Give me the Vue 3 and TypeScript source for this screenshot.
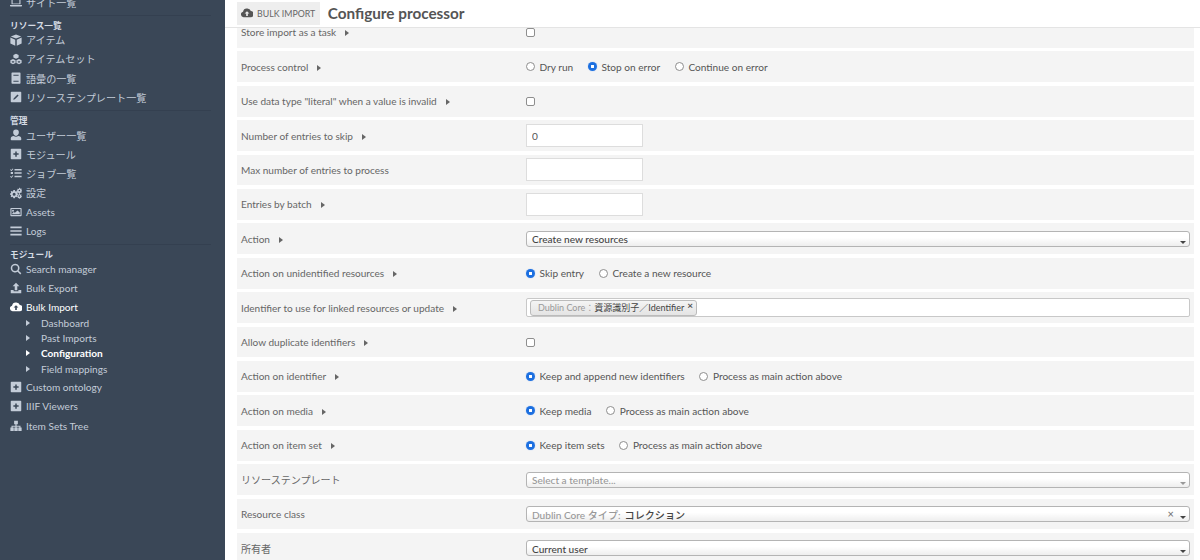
<script setup lang="ts">
type Control =
  | { kind: 'check' }
  | { kind: 'radio'; options: string[]; checked: number }
  | { kind: 'input'; value?: string }
  | { kind: 'select'; text: string; placeholder?: boolean; prefix?: string; clear?: boolean }
  | { kind: 'tags' }

interface Row {
  label: string
  arrow?: boolean
  control: Control
}

interface NavItem {
  icon: string
  label: string
  active?: boolean
  children?: { label: string; active?: boolean }[]
}

interface NavGroup {
  title?: string
  items: NavItem[]
}

const groups: NavGroup[] = [
  { items: [{ icon: 'laptop', label: 'サイト一覧' }] },
  {
    title: 'リソース一覧',
    items: [
      { icon: 'cube', label: 'アイテム' },
      { icon: 'cubes', label: 'アイテムセット' },
      { icon: 'book', label: '語彙の一覧' },
      { icon: 'edit', label: 'リソーステンプレート一覧' },
    ],
  },
  {
    title: '管理',
    items: [
      { icon: 'user', label: 'ユーザー一覧' },
      { icon: 'plus', label: 'モジュール' },
      { icon: 'tasks', label: 'ジョブ一覧' },
      { icon: 'cogs', label: '設定' },
      { icon: 'image', label: 'Assets' },
      { icon: 'bars', label: 'Logs' },
    ],
  },
  {
    title: 'モジュール',
    items: [
      { icon: 'search', label: 'Search manager' },
      { icon: 'upload', label: 'Bulk Export' },
      {
        icon: 'cloud',
        label: 'Bulk Import',
        active: true,
        children: [
          { label: 'Dashboard' },
          { label: 'Past Imports' },
          { label: 'Configuration', active: true },
          { label: 'Field mappings' },
        ],
      },
      { icon: 'plus', label: 'Custom ontology' },
      { icon: 'plus', label: 'IIIF Viewers' },
      { icon: 'tree', label: 'Item Sets Tree' },
    ],
  },
]

const rows: Row[] = [
  { label: 'Store import as a task', arrow: true, control: { kind: 'check' } },
  { label: 'Process control', arrow: true, control: { kind: 'radio', options: ['Dry run', 'Stop on error', 'Continue on error'], checked: 1 } },
  { label: 'Use data type "literal" when a value is invalid', arrow: true, control: { kind: 'check' } },
  { label: 'Number of entries to skip', arrow: true, control: { kind: 'input', value: '0' } },
  { label: 'Max number of entries to process', control: { kind: 'input' } },
  { label: 'Entries by batch', arrow: true, control: { kind: 'input' } },
  { label: 'Action', arrow: true, control: { kind: 'select', text: 'Create new resources' } },
  { label: 'Action on unidentified resources', arrow: true, control: { kind: 'radio', options: ['Skip entry', 'Create a new resource'], checked: 0 } },
  { label: 'Identifier to use for linked resources or update', arrow: true, control: { kind: 'tags' } },
  { label: 'Allow duplicate identifiers', arrow: true, control: { kind: 'check' } },
  { label: 'Action on identifier', arrow: true, control: { kind: 'radio', options: ['Keep and append new identifiers', 'Process as main action above'], checked: 0 } },
  { label: 'Action on media', arrow: true, control: { kind: 'radio', options: ['Keep media', 'Process as main action above'], checked: 0 } },
  { label: 'Action on item set', arrow: true, control: { kind: 'radio', options: ['Keep item sets', 'Process as main action above'], checked: 0 } },
  { label: 'リソーステンプレート', control: { kind: 'select', text: 'Select a template...', placeholder: true } },
  { label: 'Resource class', control: { kind: 'select', text: 'コレクション', prefix: 'Dublin Core タイプ:', clear: true } },
  { label: '所有者', control: { kind: 'select', text: 'Current user' } },
]
</script>

<template>
  <div class="page">
    <aside class="sidebar">
      <section v-for="(group, g) in groups" :key="g" class="group">
        <h4 v-if="group.title">{{ group.title }}</h4>
        <template v-for="item in group.items" :key="item.label">
          <div class="nav-item" :class="{ active: item.active }">
            <svg class="icon" viewBox="0 0 16 16" fill="currentColor">
              <path v-if="item.icon === 'laptop'" d="M3 2h10a1 1 0 0 1 1 1v8H2V3a1 1 0 0 1 1-1zm.5 1.5V10h9V3.5zM0 12h16v1a1 1 0 0 1-1 1H1a1 1 0 0 1-1-1z" />
              <path v-else-if="item.icon === 'cube'" d="M8 .5l7 2.700L8 6 1 3.200zM.5 4.800L7 7.500V15.500L.5 12.700zM15.500 4.800v7.900L9 15.500V7.500z" />
              <path v-else-if="item.icon === 'cubes'" d="M8 1l3.500 1.500v3.600L8 7.600 4.500 6.100V2.500zM4 8l3.500 1.500v3.800L4 15 .5 13.300V9.500zM12 8l3.500 1.500v3.800L12 15l-3.500-1.700V9.500zM2.500 10.500v1.900L4 13.100l1.500-.7v-1.900L4 11.200zM10.500 10.500v1.900l1.500.7 1.500-.7v-1.900l-1.500.7z" />
              <path v-else-if="item.icon === 'book'" fill-rule="evenodd" d="M3 .5h10a1 1 0 0 1 1 1v13a1 1 0 0 1-1 1H3a1 1 0 0 1-1-1v-13a1 1 0 0 1 1-1zm1.500 3v1.500h7V3.500zm0 8v1.500h7V11.500z" />
              <path v-else-if="item.icon === 'edit'" fill-rule="evenodd" d="M2 1h12a1 1 0 0 1 1 1v12a1 1 0 0 1-1 1H2a1 1 0 0 1-1-1V2a1 1 0 0 1 1-1zM10 4.500L5 9.500l-.7 2.200 2.200-.7 5-5z" />
              <path v-else-if="item.icon === 'user'" d="M8 .8a3.800 3.800 0 0 1 3.800 4c0 2.400-1.700 4.400-3.800 4.400S4.200 7.200 4.200 4.800A3.800 3.800 0 0 1 8 .8zM5 9.200c1.800 1.300 4.200 1.300 6 0 2.500.3 4 1.500 4 3.300V14a1 1 0 0 1-1 1H2a1 1 0 0 1-1-1v-1.500c0-1.800 1.500-3 4-3.300z" />
              <path v-else-if="item.icon === 'plus'" fill-rule="evenodd" d="M2 1h12a1 1 0 0 1 1 1v12a1 1 0 0 1-1 1H2a1 1 0 0 1-1-1V2a1 1 0 0 1 1-1zm5 3.500V7H4.500v2H7v2.500h2V9h2.500V7H9V4.500z" />
              <path v-else-if="item.icon === 'tasks'" d="M6 2.500h9.500v2H6zM6 7h9.500v2H6zM6 11.500h9.500v2H6zM.8 3l1 1L3.700 2l.8.8L1.800 5.500.1 3.800zM1 6.700h3v2.600H1zM.8 12l1 1 1.900-2 .8.8-2.700 2.700-1.700-1.700z" />
              <path v-else-if="item.icon === 'cogs'" fill-rule="evenodd" d="M5.500 4l1 .1.400 1.400 1.100.5 1.300-.7.8.9-.7 1.200.5 1.100 1.400.4v1.300l-1.400.4-.5 1.100.7 1.200-.8.9-1.300-.7-1.100.5-.4 1.400H4.500l-.4-1.400-1.100-.5-1.300.7-.8-.9.7-1.200L1.100 10.500-.2 10.100V8.800l1.300-.4.500-1.100-.7-1.200.8-.9 1.300.7L4.100 5.500 4.500 4.100zM5.500 7.500a2 2 0 1 0 0 4 2 2 0 0 0 0-4zM12.500 1l.8.1.2.9.8.4.9-.4.5.7-.5.8.2.9.9.3v.9l-.9.3-.4.8.5.8-.6.6-.8-.4-.8.3-.3.9h-.9l-.3-.9-.8-.4-.8.5-.6-.6.5-.9-.3-.8-.9-.3v-.8l.9-.3.3-.8-.5-.8.6-.6.8.4.8-.3zM12.500 3.500a1 1 0 1 0 0 2 1 1 0 0 0 0-2zM12.500 9l.7.1.2.8.7.3.7-.4.5.6-.4.7.2.7.8.2v.9l-.8.2-.3.7.4.7-.5.6-.7-.4-.7.3-.2.8h-.8l-.2-.8-.7-.3-.7.4-.5-.6.4-.7-.3-.7-.8-.2v-.8l.8-.3.3-.7-.4-.7.5-.6.7.4.7-.3zM12.500 11a1 1 0 1 0 0 2 1 1 0 0 0 0-2z" />
              <path v-else-if="item.icon === 'image'" fill-rule="evenodd" d="M1.500 2.500h13a1 1 0 0 1 1 1v9a1 1 0 0 1-1 1h-13a1 1 0 0 1-1-1v-9a1 1 0 0 1 1-1zm.5 1.500v8h12V4zm2 1a1.300 1.300 0 1 1 0 2.600A1.300 1.300 0 0 1 4 5zm-1 6V9.500l2-1.500 1.500 1 3.500-3 3 2.500V11z" />
              <path v-else-if="item.icon === 'bars'" d="M.5 2h15v2.200H.5zM.5 6.900h15v2.200H.5zM.5 11.800h15v2.200H.5z" />
              <path v-else-if="item.icon === 'search'" fill-rule="evenodd" d="M6.800 1a5.800 5.800 0 0 1 4.700 9.200l3.600 3.600-1.400 1.400-3.600-3.600A5.800 5.800 0 1 1 6.800 1zm0 2a3.800 3.800 0 1 0 0 7.600 3.800 3.800 0 0 0 0-7.600z" />
              <path v-else-if="item.icon === 'upload'" d="M8 1l4.500 4.500H9.700V11H6.300V5.500H3.500zM1 10.500h3.800v1.800h6.400v-1.800H15V15H1z" />
              <path v-else-if="item.icon === 'cloud'" fill-rule="evenodd" d="M8.500 2a4.800 4.800 0 0 1 4.600 3.400A3.900 3.900 0 0 1 12.500 13.500H3.700a3.600 3.600 0 0 1-1-7.100A5.300 5.300 0 0 1 8.500 2zM8 5.500L4.800 8.800h2.100V12h2.200V8.800h2.100z" />
              <path v-else d="M5.500 1h5v4.500H8.800v2H14V10h1.500v4.500H11V10h1.500V9H8.800v1h1.500v4.500H5.700V10h1.500V9H3.500v1H5v4.500H.5V10H2V7.500h5.200v-2H5.500z" />
            </svg>
            <span>{{ item.label }}</span>
          </div>
          <div v-if="item.children" class="nav-children">
            <div v-for="child in item.children" :key="child.label" class="nav-child" :class="{ active: child.active }">
              <i class="tri"></i>{{ child.label }}
            </div>
          </div>
        </template>
      </section>
    </aside>

    <main class="main">
      <header class="topbar">
        <div class="badge">
          <svg class="badge-icon" viewBox="0 0 16 16" fill="currentColor">
            <path fill-rule="evenodd" d="M8.500 2a4.800 4.800 0 0 1 4.600 3.400A3.900 3.900 0 0 1 12.500 13.500H3.700a3.600 3.600 0 0 1-1-7.100A5.300 5.300 0 0 1 8.500 2zM8 5.500L4.800 8.800h2.100V12h2.200V8.800h2.100z" />
          </svg>
          BULK IMPORT
        </div>
        <h1>Configure processor</h1>
      </header>

      <div class="scroller">
        <div class="rows">
          <div v-for="row in rows" :key="row.label" class="row">
            <div class="label">
              {{ row.label }}<i v-if="row.arrow" class="tri"></i>
            </div>
            <div class="control">
              <input v-if="row.control.kind === 'check'" class="check" type="checkbox" />

              <div v-else-if="row.control.kind === 'radio'" class="radios">
                <label v-for="(opt, i) in row.control.options" :key="opt" class="radio">
                  <input type="radio" :name="row.label" :checked="i === row.control.checked" />{{ opt }}
                </label>
              </div>

              <input v-else-if="row.control.kind === 'input'" class="text" type="text" :value="row.control.value ?? ''" />

              <div v-else-if="row.control.kind === 'select'" class="select" :class="{ placeholder: row.control.placeholder }">
                <span v-if="row.control.prefix" class="prefix">{{ row.control.prefix }}</span>
                <span>{{ row.control.text }}</span>
                <span v-if="row.control.clear" class="clear">×</span>
                <i class="caret"></i>
              </div>

              <div v-else class="tags">
                <span class="tag">
                  <span class="prefix">Dublin Core：</span>資源識別子／Identifier<b>×</b>
                </span>
              </div>
            </div>
          </div>
        </div>
      </div>
    </main>
  </div>
</template>

<style>
html, body { margin: 0; background: #fff; }
</style>

<style scoped>
.page {
  display: flex;
  width: 1200px;
  height: 560px;
  overflow: hidden;
  font-family: Lato, "Noto Sans CJK JP", sans-serif;
  color: #555;
}

/* sidebar */
.sidebar {
  width: 225px;
  flex: none;
  box-sizing: border-box;
  padding: 0 14px 0 10px;
  background: #3a4757;
  color: #c3ccd8;
  font-size: 10.1px;
  overflow: hidden;
}
.group { padding-bottom: 3px; margin-bottom: 3.5px; border-bottom: 1px solid #344050; }
.group:first-child { margin-top: -7.5px; }
.group:last-child { border-bottom: 0; }
.group h4 {
  margin: 0;
  height: 11px;
  line-height: 13px;
  font-size: 8.7px;
  font-weight: 700;
  color: #d6dce4;
}
.nav-item {
  display: flex;
  align-items: center;
  gap: 4px;
  height: 19.2px;
}
.nav-item.active, .nav-child.active { color: #fff; }
.icon { width: 12px; height: 12px; flex: none; }
.nav-children { margin: -1.6px 0 1.4px; }
.nav-child {
  display: flex;
  align-items: center;
  height: 15.3px;
  padding-left: 16px;
}
.nav-child .tri { margin: 0 11px 0 0; }
.nav-child.active { font-weight: 700; }
.tri {
  display: inline-block;
  width: 0;
  height: 0;
  margin-left: 9px;
  border-style: solid;
  border-width: 3px 0 3px 4px;
  border-color: transparent transparent transparent currentColor;
}

/* main */
.main { flex: 1; min-width: 0; display: flex; flex-direction: column; }
.topbar {
  height: 28px;
  flex: none;
  box-sizing: border-box;
  display: flex;
  align-items: center;
  gap: 7.5px;
  padding: 0 0 1px 12px;
  background: #fff;
  border-bottom: 1px solid #e4e4e4;
  position: relative;
  z-index: 1;
}
.badge {
  display: flex;
  align-items: center;
  gap: 4px;
  height: 23px;
  padding: 0 5px 0 4px;
  background: #eee;
  font-size: 8.8px;
  color: #666;
}
.badge-icon { width: 12px; height: 12px; color: #555; }
.topbar h1 { margin: 0; font-size: 15.3px; font-weight: 700; color: #555; }

.scroller { flex: 1; overflow: hidden; padding: 0 6px 0 12px; }
.rows { display: flex; flex-direction: column; gap: 3.72px; margin-top: -11px; }
.row {
  display: flex;
  align-items: center;
  height: 30.7px;
  flex: none;
  box-sizing: border-box;
  padding: 0 4px;
  background: #f4f4f4;
  font-size: 10.05px;
}
.label { width: 285px; flex: none; color: #666; }
.control { flex: 1; min-width: 0; display: flex; align-items: center; color: #555; font-size: 10.1px; }

.check {
  appearance: none;
  width: 9px;
  height: 9px;
  margin: 1px 0 0;
  background: #fff;
  border: 1px solid #8e8e8e;
  border-radius: 2px;
}
.radios { display: flex; gap: 14.8px; }
.radio { display: flex; align-items: center; gap: 4.5px; }
.radio input {
  appearance: none;
  width: 9px;
  height: 9px;
  margin: 0;
  background: #fff;
  border: 1px solid #8e8e8e;
  border-radius: 50%;
}
.radio input:checked {
  border: 0;
  background: radial-gradient(circle, #fff 0 1.4px, #1c6fe0 1.9px);
  box-shadow: 0 0 1px #6ea3ee;
}

.text {
  width: 117px;
  height: 23px;
  box-sizing: border-box;
  padding: 0 5px;
  background: #fff;
  border: 1px solid #ddd;
  font: inherit;
  color: #555;
  outline: 0;
}

.select {
  flex: 1;
  position: relative;
  display: flex;
  align-items: center;
  gap: 4px;
  height: 16px;
  box-sizing: border-box;
  padding: 1px 5px 0;
  border: 1px solid #b4b4b4;
  border-radius: 3px;
  background: linear-gradient(#fff 40%, #eee 100%);
  color: #444;
  font-weight: 500;
}
.select.placeholder { color: #999; }
.prefix { color: #999; }
.caret {
  position: absolute;
  right: 3px;
  bottom: 2px;
  width: 0;
  height: 0;
  border-style: solid;
  border-width: 3px 3.5px 0;
  border-color: #444 transparent transparent;
}
.select.placeholder .caret { border-top-color: #999; }
.clear { position: absolute; right: 15px; top: 0; font-size: 11px; line-height: 14px; color: #777; }

.tags {
  flex: 1;
  display: flex;
  align-items: center;
  height: 19px;
  box-sizing: border-box;
  padding: 0 3px;
  background: #fff;
  border: 1px solid #c8c8c8;
  border-radius: 2px;
}
.tag {
  display: flex;
  align-items: center;
  height: 14px;
  padding: 0 3px 0 7px;
  background: linear-gradient(#f4f4f4, #e4e4e4);
  border: 1px solid #bbb;
  border-radius: 3px;
  font-size: 9px;
  color: #444;
}
.tag b { margin: -5px 0 0 3px; font-weight: 700; font-size: 10px; line-height: 10px; color: #555; }
</style>
